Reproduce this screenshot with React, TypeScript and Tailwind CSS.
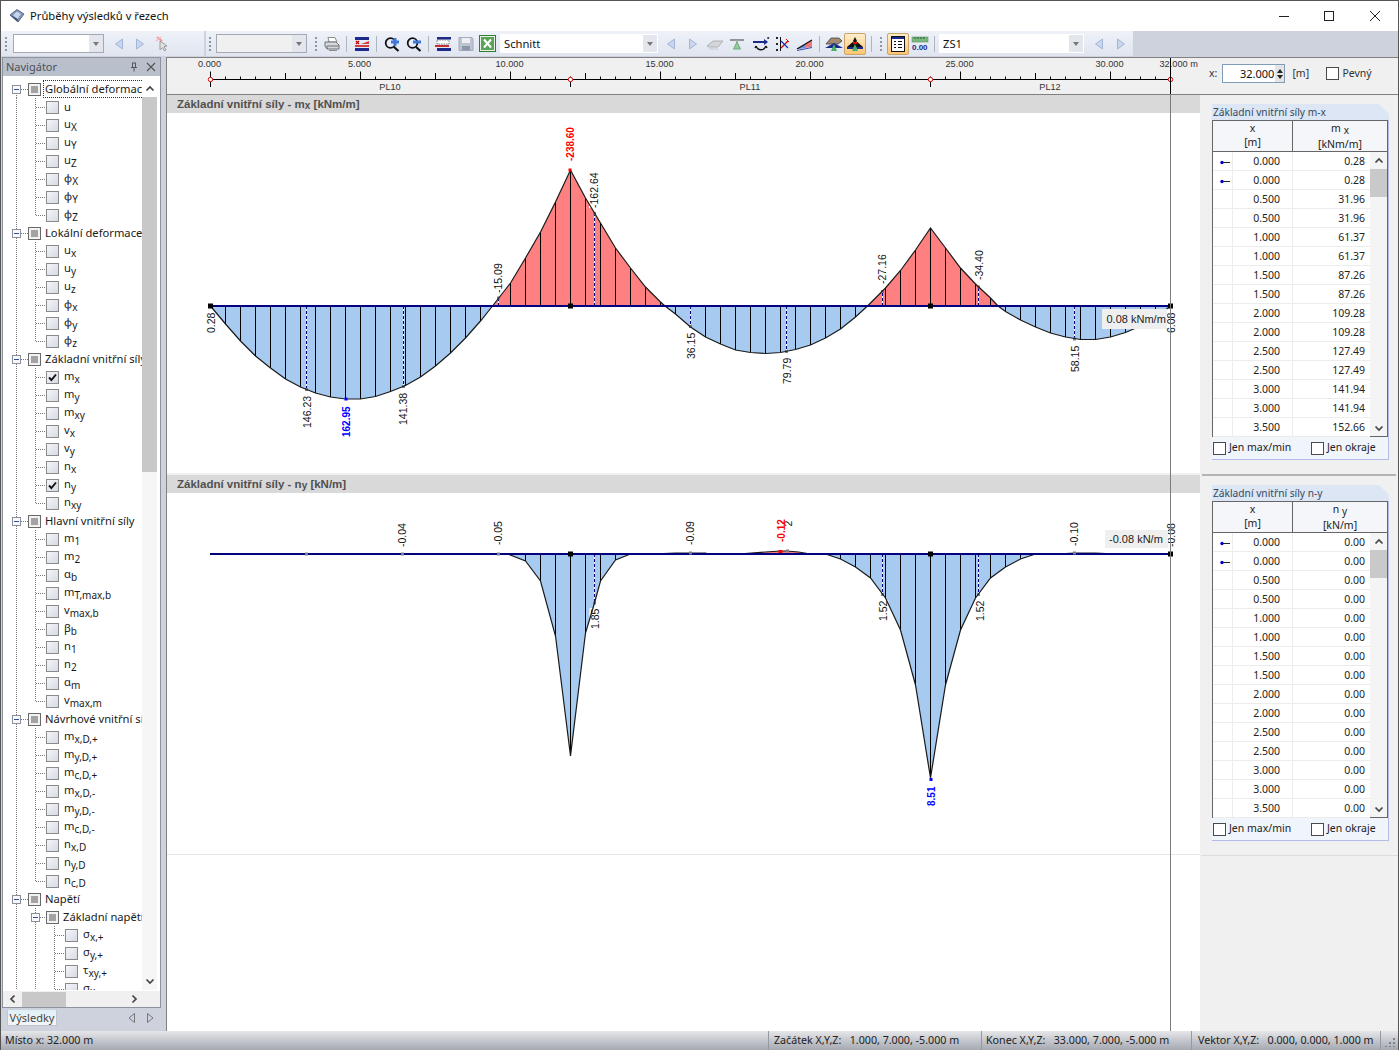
import type { ReactNode } from 'react'

type Pt = [number, number]

const sx = (m: number) => 210.5 + 30 * m

// moment curve pieces read off the plot, offset in px from the base line
const mxBlue: Pt[][] = [
  [[0, 0], [0.5, 18], [1, 35], [1.5, 50], [2, 62], [2.5, 73], [3, 81], [3.5, 87], [4, 91], [4.5, 93], [5, 93], [5.5, 90.5], [6, 85.5], [6.5, 79.5], [7, 71], [7.5, 60], [8, 47], [8.5, 32], [9, 15], [9.4, 0]],
  [[15.15, 0], [15.5, 8], [16, 21], [16.5, 31], [17, 38], [17.5, 44], [18, 46.5], [18.5, 47.5], [19, 46.5], [19.5, 43.5], [20, 39], [20.5, 32], [21, 23], [21.5, 11], [21.9, 0]],
  [[26.25, 0], [26.5, 5.5], [27, 14], [27.5, 21], [28, 27], [28.5, 31], [29, 33.5], [29.5, 33.5], [30, 31], [30.5, 26.5], [31, 20], [31.5, 11.5], [32, 0]],
]
const mxRed: Pt[][] = [
  [[9.4, 0], [10, -23], [10.5, -48], [11, -74], [11.5, -104], [12, -136], [12.5, -108], [13, -83], [13.5, -58], [14, -38], [14.5, -19], [15, -4], [15.15, 0]],
  [[21.9, 0], [22.5, -18], [23, -35.5], [23.5, -56], [24, -78], [24.5, -58], [25, -38], [25.5, -22], [26, -8], [26.25, 0]],
]
const nyBlue: Pt[][] = [
  [[9.9, 0], [10.5, 7], [11, 27], [11.5, 82], [12, 202], [12.5, 79], [12.8, 49], [13, 27], [13.5, 6], [14, 0]],
  [[20.5, 0], [21, 5], [21.5, 13], [22, 24], [22.5, 44], [23, 76], [23.5, 131], [24, 224], [24.5, 131], [25, 76], [25.5, 44], [26, 24], [26.5, 13], [27, 5], [27.5, 0]],
]
const nyRed: Pt[][] = [[[17.6, 0], [18.5, -2], [19, -3], [19.2, -3], [19.6, -2], [20, 0]]]
const nyThin: Pt[][] = [
  [[14.7, 0], [15.5, -1], [16, -1], [16.5, -1], [16.5, -1], [16.6, 0]],
  [[28.2, 0], [28.8, -1], [29.5, -1], [30.2, 0]],
]

interface ValueLabel {
  x: number
  y: number
  t: string
  c?: string
  b?: boolean
}

const mxLabels: ValueLabel[] = [
  { x: 211, y: 333, t: '0.28' },
  { x: 307, y: 428, t: '146.23' },
  { x: 346.5, y: 437, t: '162.95', c: '#0000ff', b: true },
  { x: 403.5, y: 425, t: '141.38' },
  { x: 498.5, y: 293, t: '-15.09' },
  { x: 570, y: 161, t: '-238.60', c: '#ff0000', b: true },
  { x: 594.5, y: 208, t: '-162.64' },
  { x: 691, y: 359, t: '36.15' },
  { x: 787, y: 384, t: '79.79' },
  { x: 882, y: 284, t: '-27.16' },
  { x: 979, y: 280, t: '-34.40' },
  { x: 1075, y: 372, t: '58.15' },
  { x: 1171.5, y: 333, t: '6.08' },
]
const nyLabels: ValueLabel[] = [
  { x: 402, y: 547, t: '-0.04' },
  { x: 498, y: 545, t: '-0.05' },
  { x: 595, y: 629, t: '1.85' },
  { x: 690, y: 545, t: '-0.09' },
  { x: 788, y: 541, t: '0.12' },
  { x: 781, y: 542, t: '-0.12', c: '#ff0000', b: true },
  { x: 883, y: 621, t: '1.52' },
  { x: 980, y: 621, t: '1.52' },
  { x: 931.5, y: 806, t: '8.51', c: '#0000ff', b: true },
  { x: 1074, y: 546, t: '-0.10' },
  { x: 1171.5, y: 547, t: '-0.08' },
]

function Curves({ parts, base, fill }: { parts: Pt[][]; base: number; fill: string }) {
  return (
    <>
      {parts.map((p, i) => (
        <polygon key={i} points={p.map(([m, d]) => `${sx(m)},${base + d}`).join(' ')} fill={fill} />
      ))}
    </>
  )
}

function Ticks({ parts, base }: { parts: Pt[][]; base: number }) {
  const out: ReactNode[] = []
  parts.forEach((p, i) => {
    p.forEach(([m, d], j) => {
      if (Math.abs(d) > 2 && (m * 2) % 1 === 0) {
        out.push(<line key={`${i}-${j}`} x1={sx(m)} x2={sx(m)} y1={base} y2={base + d} stroke="#000" strokeWidth={1} />)
      }
    })
  })
  return <>{out}</>
}

function Outline({ parts, base }: { parts: Pt[][]; base: number }) {
  return (
    <>
      {parts.map((p, i) => (
        <polyline key={i} points={p.map(([m, d]) => `${sx(m)},${base + d}`).join(' ')} fill="none" stroke="#1a1a1a" strokeWidth={1.2} />
      ))}
    </>
  )
}

function Dash({ x, y1, y2 }: { x: number; y1: number; y2: number }) {
  return (
    <>
      <line x1={x} x2={x} y1={y1} y2={y2} stroke="#fff" strokeWidth={1} />
      <line x1={x} x2={x} y1={y1} y2={y2} stroke="#000080" strokeWidth={1} strokeDasharray="3 2" />
      <rect x={x - 1.5} y={y2 - 1.5} width={3} height={3} fill="#808080" />
    </>
  )
}

function LabelBack({ l }: { l: ValueLabel }) {
  const len = l.t.length * 5.2
  return <rect x={l.x - 5.5} y={l.y - len} width={11} height={len} fill="#fff" />
}

function LabelText({ l }: { l: ValueLabel }) {
  return (
    <text
      transform={`rotate(-90 ${l.x} ${l.y})`}
      x={l.x}
      y={l.y + 3.8}
      fontSize={l.b ? 10 : 10.5}
      fontWeight={l.b ? 700 : 400}
      fill={l.c ?? '#111'}
    >
      {l.t}
    </text>
  )
}

function Support({ x, y }: { x: number; y: number }) {
  return <rect x={x - 2.5} y={y - 2.5} width={5} height={5} fill="#000" />
}

function MxChart() {
  const base = 306
  return (
    <svg width={1033} height={360} viewBox="167 113 1033 360" className="block font-['Liberation_Sans',sans-serif]">
      <Curves parts={mxBlue} base={base} fill="#a6caf0" />
      <Curves parts={mxRed} base={base} fill="#ff8080" />
      {mxLabels.map((l) => <LabelBack key={l.t} l={l} />)}
      <Ticks parts={mxBlue} base={base} />
      <Ticks parts={mxRed} base={base} />
      <Dash x={306.5} y1={base} y2={389.5} />
      <Dash x={403.5} y1={base} y2={386.5} />
      <Dash x={498.5} y1={base} y2={298} />
      <Dash x={594.5} y1={base} y2={213.5} />
      <Dash x={690.5} y1={base} y2={326.5} />
      <Dash x={786.5} y1={base} y2={351.5} />
      <Dash x={882.5} y1={base} y2={291.5} />
      <Dash x={978.5} y1={base} y2={287} />
      <Dash x={1074.5} y1={base} y2={339} />
      <Outline parts={mxBlue} base={base} />
      <Outline parts={mxRed} base={base} />
      <line x1={210} x2={1171} y1={base} y2={base} stroke="#000080" strokeWidth={2} />
      {mxLabels.map((l) => <LabelText key={l.t} l={l} />)}
      <rect x={344.5} y={397.5} width={3} height={3} fill="#0000ff" />
      <rect x={568.5} y={168.5} width={3} height={3} fill="#ff0000" />
      <Support x={210.5} y={base} />
      <Support x={570.5} y={base} />
      <Support x={930.5} y={base} />
      <Support x={1170.5} y={base} />
      <rect x={1102} y={309} width={65} height={20} fill="#efefef" />
      <text x={1106.5} y={323} fontSize={11} fill="#222">0.08 kNm/m</text>
    </svg>
  )
}

function NyChart() {
  const base = 554
  return (
    <svg width={1033} height={360} viewBox="167 494 1033 360" className="block font-['Liberation_Sans',sans-serif]">
      <Curves parts={nyBlue} base={base} fill="#a6caf0" />
      <Curves parts={nyRed} base={base} fill="#ff8080" />
      {nyLabels.filter((l) => l.t !== '0.12').map((l) => <LabelBack key={l.t + l.x} l={l} />)}
      <Ticks parts={nyBlue} base={base} />
      <Dash x={594.5} y1={base} y2={603} />
      <Dash x={882.5} y1={base} y2={594.5} />
      <Dash x={978.5} y1={base} y2={594.5} />
      <Outline parts={nyBlue} base={base} />
      <Outline parts={nyRed} base={base} />
      <Outline parts={nyThin} base={base} />
      <line x1={210} x2={1171} y1={base} y2={base} stroke="#000080" strokeWidth={2} />
      <rect x={305} y={552.5} width={3} height={3} fill="#808080" />
      <rect x={401} y={552.5} width={3} height={3} fill="#808080" />
      <rect x={497} y={552.5} width={3} height={3} fill="#808080" />
      <rect x={689} y={551.5} width={3} height={3} fill="#808080" />
      <rect x={786} y={549.5} width={3} height={3} fill="#808080" />
      <rect x={1073} y={551.5} width={3} height={3} fill="#808080" />
      {nyLabels.filter((l) => l.t === '0.12').map((l) => <LabelText key={l.t + l.x} l={l} />)}
      <rect x={782} y={527} width={11} height={20} fill="#fff" />
      {nyLabels.filter((l) => l.t !== '0.12').map((l) => <LabelText key={l.t + l.x} l={l} />)}
      <rect x={778.5} y={550} width={4} height={3} fill="#ff0000" />
      <rect x={929.5} y={778} width={3} height={3} fill="#0000ff" />
      <Support x={570.5} y={base} />
      <Support x={930.5} y={base} />
      <Support x={1170.5} y={base} />
      <rect x={1105} y={530} width={63} height={18} fill="#efefef" />
      <text x={1109} y={543} fontSize={11} fill="#222">-0.08 kN/m</text>
    </svg>
  )
}

function Ruler() {
  const ticks = Array.from({ length: 65 }, (_, i) => i)
  return (
    <svg width={1036} height={36} viewBox="167 58 1036 36" className="block shrink-0 font-['Liberation_Sans',sans-serif]">
      <line x1={210} x2={1171} y1={79.5} y2={79.5} stroke="#000" strokeWidth={1} />
      {ticks.map((i) => {
        const h = i % 10 === 0 ? 8 : i % 5 === 0 ? 6.5 : 3
        return <line key={i} x1={210.5 + 15 * i} x2={210.5 + 15 * i} y1={79.5 - h} y2={79.5} stroke="#000" strokeWidth={1} />
      })}
      {[0, 5, 10, 15, 20, 25, 30].map((m) => (
        <text key={m} x={sx(m) - 1} y={67} fontSize={9.2} textAnchor="middle" fill="#333">{m.toFixed(3)}</text>
      ))}
      <text x={1159.5} y={67} fontSize={9.2} fill="#333">32.000 m</text>
      {[0, 12, 24, 32].map((m) => (
        <g key={m}>
          <line x1={sx(m)} x2={sx(m)} y1={79.5} y2={87} stroke="#000" strokeWidth={1} />
          <circle cx={sx(m)} cy={79.5} r={2.2} fill="#fff" stroke="#e00000" strokeWidth={1} />
        </g>
      ))}
      <text x={390} y={90} fontSize={9.2} textAnchor="middle" fill="#333">PL10</text>
      <text x={750} y={90} fontSize={9.2} textAnchor="middle" fill="#333">PL11</text>
      <text x={1050} y={90} fontSize={9.2} textAnchor="middle" fill="#333">PL12</text>
      <line x1={1170.5} x2={1170.5} y1={58} y2={94} stroke="#000" strokeWidth={1} />
    </svg>
  )
}

/* ---------- navigator ---------- */

interface TreeRow {
  level: 0 | 1 | 2
  node?: boolean
  base: string
  sub?: string
  checked?: boolean
  last?: boolean
  first?: boolean
}

const leaves = (items: [string, string?, boolean?][]): TreeRow[] =>
  items.map(([base, sub, checked], i) => ({ level: 1, base, sub, checked, last: i === items.length - 1 }))

const treeRows: TreeRow[] = [
  { level: 0, node: true, base: 'Globální deformace', first: true },
  ...leaves([['u'], ['u', 'X'], ['u', 'Y'], ['u', 'Z'], ['φ', 'X'], ['φ', 'Y'], ['φ', 'Z']]),
  { level: 0, node: true, base: 'Lokální deformace' },
  ...leaves([['u', 'x'], ['u', 'y'], ['u', 'z'], ['φ', 'x'], ['φ', 'y'], ['φ', 'z']]),
  { level: 0, node: true, base: 'Základní vnitřní síly' },
  ...leaves([['m', 'x', true], ['m', 'y'], ['m', 'xy'], ['v', 'x'], ['v', 'y'], ['n', 'x'], ['n', 'y', true], ['n', 'xy']]),
  { level: 0, node: true, base: 'Hlavní vnitřní síly' },
  ...leaves([['m', '1'], ['m', '2'], ['α', 'b'], ['m', 'T,max,b'], ['v', 'max,b'], ['β', 'b'], ['n', '1'], ['n', '2'], ['α', 'm'], ['v', 'max,m']]),
  { level: 0, node: true, base: 'Návrhové vnitřní síly' },
  ...leaves([['m', 'x,D,+'], ['m', 'y,D,+'], ['m', 'c,D,+'], ['m', 'x,D,-'], ['m', 'y,D,-'], ['m', 'c,D,-'], ['n', 'x,D'], ['n', 'y,D'], ['n', 'c,D']]),
  { level: 0, node: true, base: 'Napětí' },
  { level: 1, node: true, base: 'Základní napětí' },
  { level: 2, base: 'σ', sub: 'x,+' },
  { level: 2, base: 'σ', sub: 'y,+' },
  { level: 2, base: 'τ', sub: 'xy,+' },
  { level: 2, base: 'σ', sub: 'x' },
]

function Connector({ row }: { row: TreeRow }) {
  const width = row.level === 0 ? 28 : row.level === 1 ? 46 : 65
  const line = { stroke: '#777', strokeWidth: 1, strokeDasharray: '1 1' }
  const boxX = row.level === 0 ? 12 : 31
  return (
    <svg width={width} height={18} className="shrink-0 block">
      <line x1={16.5} x2={16.5} y1={row.first ? 9 : 0} y2={18} {...line} />
      {row.level >= 1 && <line x1={35.5} x2={35.5} y1={0} y2={row.last ? 9 : 18} {...line} />}
      {row.level === 2 && <line x1={54.5} x2={54.5} y1={0} y2={18} {...line} />}
      {row.node ? (
        <>
          <line x1={boxX + 9} x2={width} y1={9.5} y2={9.5} {...line} />
          <rect x={boxX + 0.5} y={5.5} width={8} height={8} fill="#f7f9fc" stroke="#8a8f9a" />
          <line x1={boxX + 2} x2={boxX + 7} y1={9.5} y2={9.5} stroke="#2f4fa0" />
        </>
      ) : (
        <line x1={row.level === 1 ? 36 : 55} x2={width} y1={9.5} y2={9.5} {...line} />
      )}
    </svg>
  )
}

function Check({ row }: { row: TreeRow }) {
  if (row.node) {
    return (
      <span className="w-[13px] h-[13px] shrink-0 border border-[#6a6a6a] bg-[#f2f2f2] flex items-center justify-center">
        <span className="w-[7px] h-[7px] bg-[#a3a3a3]" />
      </span>
    )
  }
  return (
    <span className="w-[13px] h-[13px] shrink-0 border border-[#8a8a8a] bg-gradient-to-br from-[#f4f5f8] to-[#d6dbe4] flex items-center justify-center">
      {row.checked && (
        <svg width={9} height={9} viewBox="0 0 9 9">
          <path d="M1 4.5 L3.4 7 L8 1.5" fill="none" stroke="#111" strokeWidth={1.9} />
        </svg>
      )}
    </span>
  )
}

function Tree() {
  return (
    <div className="w-[142px] h-full overflow-hidden -ml-[3px] shrink-0">
      {treeRows.map((row, i) => (
        <div key={i} className="h-[18px] flex items-center w-[260px] text-[11.2px] text-[#1a1a1a]">
          <Connector row={row} />
          <Check row={row} />
          {row.node ? (
            <span className={`ml-[3px] px-[1px] leading-[16px] whitespace-nowrap ${row.first ? 'outline outline-1 outline-dotted outline-[#333]' : ''}`}>
              {row.base}
            </span>
          ) : (
            <span className="ml-[5px] leading-[16px] whitespace-nowrap">
              {row.base}
              {row.sub && <span className="text-[10px] align-[-3px]">{row.sub}</span>}
            </span>
          )}
        </div>
      ))}
    </div>
  )
}

function Chevron({ dir }: { dir: 'up' | 'down' | 'left' | 'right' }) {
  const d = {
    up: 'M1.5 6.5 L5 3 L8.5 6.5',
    down: 'M1.5 3.5 L5 7 L8.5 3.5',
    left: 'M6.5 1.5 L3 5 L6.5 8.5',
    right: 'M3.5 1.5 L7 5 L3.5 8.5',
  }[dir]
  return (
    <svg width={10} height={10} viewBox="0 0 10 10" className="block">
      <path d={d} fill="none" stroke="#444" strokeWidth={1.7} />
    </svg>
  )
}

function Navigator() {
  return (
    <aside className="w-[165px] shrink-0 flex flex-col pl-[1px]">
      <div className="w-[159px] h-[951px] flex flex-col border border-[#8d939e] bg-white">
        <div className="h-[18px] shrink-0 bg-[#b9c0cc] flex items-center pl-[3px] text-[11px] text-[#4b5058]">
          <span>Navigátor</span>
          <svg width={10} height={10} viewBox="0 0 10 10" className="ml-[72px]">
            <path d="M3 1 H7 M3.5 1 V5.5 M6.5 1 V5.5 M2 5.5 H8 M5 5.5 V9.5" fill="none" stroke="#555" />
          </svg>
          <svg width={10} height={10} viewBox="0 0 10 10" className="ml-[7px]">
            <path d="M1 1 L9 9 M9 1 L1 9" fill="none" stroke="#555" strokeWidth={1.2} />
          </svg>
        </div>
        <div className="h-[4px] shrink-0" />
        <div className="flex h-[910px] shrink-0">
          <Tree />
          <div className="w-[15px] shrink-0 flex flex-col bg-[#f6f6f6]">
            <div className="h-[17px] shrink-0 bg-white flex items-center justify-center"><Chevron dir="up" /></div>
            <div className="h-[375px] shrink-0 bg-[#c8c8c8]" />
            <div className="flex-1" />
            <div className="h-[17px] shrink-0 mb-[1px] flex items-center justify-center"><Chevron dir="down" /></div>
          </div>
        </div>
        <div className="flex-1 bg-[#f0f0f0] flex items-center pl-[5px] mt-[1px]">
          <Chevron dir="left" />
          <div className="w-[44px] h-[15px] ml-[4px] bg-[#c8c8c8]" />
          <div className="ml-[63px]"><Chevron dir="right" /></div>
        </div>
      </div>
      <div className="h-[22px] flex items-start pt-[2px] pl-[5px]">
        <div className="w-[50px] h-[16px] bg-gradient-to-b from-[#dff0f5] to-[#f4f6f8] border-b border-x border-[#c0c6d0] text-[11px] text-[#444] leading-[16px] text-center rounded-b-[2px]">
          Výsledky
        </div>
        <svg width={8} height={10} viewBox="0 0 8 10" className="ml-[71px] mt-[3px]"><path d="M6.5 0.5 V9.5 L1 5 Z" fill="none" stroke="#777" /></svg>
        <svg width={8} height={10} viewBox="0 0 8 10" className="ml-[10px] mt-[3px]"><path d="M1.5 0.5 V9.5 L7 5 Z" fill="none" stroke="#777" /></svg>
      </div>
    </aside>
  )
}

/* ---------- toolbar ---------- */

function Grip({ className }: { className: string }) {
  return (
    <span className={`w-[2px] h-[14px] shrink-0 flex flex-col justify-between ${className}`}>
      <span className="h-[2px] bg-[#8f96a3]" />
      <span className="h-[2px] bg-[#8f96a3]" />
      <span className="h-[2px] bg-[#8f96a3]" />
      <span className="h-[2px] bg-[#8f96a3]" />
    </span>
  )
}

function Sep({ className }: { className: string }) {
  return <span className={`w-px h-[16px] shrink-0 bg-[#aeb4c0] ${className}`} />
}

function Slot({ children, className = '', active = false }: { children: ReactNode; className?: string; active?: boolean }) {
  return (
    <span
      className={`w-[22px] h-[22px] shrink-0 flex items-center justify-center ${className} ${
        active ? 'border border-[#c9a56a] rounded-[2px] bg-gradient-to-b from-[#ffeecb] to-[#ffc56f]' : ''
      }`}
    >
      {children}
    </span>
  )
}

function Combo({ className, text, fill = 'bg-white', border = 'border-[#a4a9b4]' }: { className: string; text?: string; fill?: string; border?: string }) {
  return (
    <span className={`h-[19px] shrink-0 flex border ${border} ${fill} ${className}`}>
      <span className="flex-1 pl-[3px] text-[11.2px] leading-[17px] text-[#111]">{text}</span>
      <span className="w-[14px] bg-[#e3e6ec] flex items-center justify-center">
        <span className="w-0 h-0 border-x-[3.5px] border-x-transparent border-t-[4px] border-t-[#777]" />
      </span>
    </span>
  )
}

const Ico = ({ children, w = 18 }: { children: ReactNode; w?: number }) => (
  <svg width={w} height={16} viewBox={`0 0 ${w} 16`} className="block">{children}</svg>
)

const NavL = () => <Ico w={12}><path d="M9.5 3 V13 L2.5 8 Z" fill="#c9d6ee" stroke="#a3b6d8" /></Ico>
const NavR = () => <Ico w={12}><path d="M2.5 3 V13 L9.5 8 Z" fill="#c9d6ee" stroke="#a3b6d8" /></Ico>

const PinCursor = () => (
  <Ico w={16}>
    <path d="M3 1 L8 5" stroke="#ee9aa0" strokeWidth={2} />
    <path d="M2 5 L7 1" stroke="#f4b9bd" strokeWidth={1.5} />
    <path d="M6 5 V14 L8.5 11.5 L10.5 15 L12 14 L10 10.5 L13 10 Z" fill="#e4e4e4" stroke="#9a9a9a" />
  </Ico>
)

const Printer = () => (
  <Ico>
    <path d="M5 1.5 H12 L14 6 H6 Z" fill="#fff" stroke="#8b8b8b" />
    <path d="M2 6 H13 L16 9 V13 H4 L2 10 Z" fill="#d5d8de" stroke="#707070" />
    <path d="M4 13 V10 H16" fill="none" stroke="#707070" />
    <path d="M6 14.5 H14" stroke="#8b8b8b" />
  </Ico>
)

const Legend = () => (
  <Ico>
    <rect x={2} y={1} width={14} height={3} fill="#1c2a8c" />
    <path d="M3 5 L6 8 M6 5 L3 8" stroke="#c00000" strokeWidth={1.3} />
    <path d="M8 8 L16 5 V8 Z" fill="#d24040" />
    <rect x={2} y={9} width={14} height={2} fill="#d24040" />
    <rect x={2} y={12} width={14} height={3} fill="#1c2a8c" />
  </Ico>
)

const ZoomIco = ({ plus }: { plus?: boolean }) => (
  <Ico>
    <circle cx={7.5} cy={7} r={4.8} fill="#e8eefc" stroke="#111" strokeWidth={1.8} />
    <path d="M11 11 L15.5 15" stroke="#111" strokeWidth={2.2} />
    <path d="M8 6 H16" stroke="#3d78d8" strokeWidth={3} />
    {plus && <path d="M12 2 V10" stroke="#3d78d8" strokeWidth={3} />}
  </Ico>
)

const Flag = () => (
  <Ico>
    <rect x={3} y={1} width={14} height={2.5} fill="#1c2a8c" />
    <path d="M3 4 H15 V8 H3 Z" fill="#fff" stroke="#333" strokeWidth={0.6} strokeDasharray="1.5 1" />
    <path d="M1 9 H15 V11 H1 Z" fill="#c83030" />
    <rect x={3} y={12} width={14} height={3} fill="#1c2a8c" />
  </Ico>
)

const Save = () => (
  <Ico>
    <path d="M2 1.5 H15 L16 3 V14.5 H2 Z" fill="#bcc4d2" stroke="#a5acb9" />
    <rect x={5} y={2} width={8} height={5} fill="#eef0f4" />
    <rect x={5} y={10} width={8} height={4.5} fill="#8d97a8" />
  </Ico>
)

const Excel = () => (
  <svg width={17} height={17} viewBox="0 0 17 17" className="block">
    <rect x={0.5} y={0.5} width={16} height={16} fill="#e8f2e6" stroke="#2f7d32" />
    <rect x={2} y={2} width={13} height={13} fill="#5aa457" />
    <path d="M5 4.5 L12 12.5 M12 4.5 L5 12.5" stroke="#fff" strokeWidth={2} />
  </svg>
)

const Plate = () => (
  <Ico><path d="M1 10 L7 5 H17 L12 11 H3 Z" fill="#d3d5d8" stroke="#b0b2b6" /><path d="M3 13 H12" stroke="#c6c8cb" /></Ico>
)

const GreenBell = () => (
  <Ico>
    <path d="M2 4 H16" stroke="#8f9497" strokeWidth={2} />
    <path d="M7 4 L9 7 L11 4" fill="#a5a8aa" />
    <path d="M9 6 L5.5 13 H12.5 Z" fill="#8fcf9c" stroke="#6fa87b" />
  </Ico>
)

const FlipArrow = () => (
  <Ico>
    <path d="M1 6 H15" stroke="#1c2a8c" strokeWidth={2} />
    <path d="M12 3 L16 6 L12 9 Z" fill="#1c2a8c" />
    <path d="M15.5 1 L17 3 M17 1 L15.5 3" stroke="#333" />
    <path d="M4 10 C6 15 12 15 14 10 M4 10 L3 12 M14 10 L15 12" fill="none" stroke="#111" strokeWidth={1.4} />
  </Ico>
)

const Cross = () => (
  <Ico>
    <path d="M1 1 L3 3 M3 1 L1 3 M1 7 L3 9 M3 7 L1 9 M1 13 L3 15 M3 13 L1 15" stroke="#222" />
    <path d="M5.5 1 V15" stroke="#111" />
    <path d="M6 12 L13 5" stroke="#e00000" strokeWidth={1.2} />
    <path d="M6 5 L13 12" stroke="#1030d0" strokeWidth={1.2} />
    <path d="M11 3 L14 6" stroke="#e00000" />
  </Ico>
)

const Wedge = () => (
  <Ico>
    <path d="M1 13 L16 4 V11 Z" fill="#e77" />
    <path d="M1 13 L9 8.5 V12 Z" fill="#6b8fdc" />
    <path d="M1 13 L16 4" stroke="#111" strokeWidth={1.3} />
    <path d="M1 14.5 L16 11.5" stroke="#3050c0" />
  </Ico>
)

const LoadHand = () => (
  <Ico>
    <path d="M1 8 L6 2 H14 L17 5 L13 8 Z" fill="#a68a70" stroke="#444" strokeWidth={0.8} />
    <path d="M0 12 H18 L9 7 Z" fill="#1c2a8c" />
    <path d="M9 8 L6 15 H12 Z" fill="#49b36b" />
  </Ico>
)

const LoadStar = () => (
  <Ico>
    <path d="M9 1 L11 5 H7 Z" fill="#111" />
    <path d="M1 11 L9 4 L17 11 Z" fill="#111" />
    <path d="M7 6 H11 V8 H7 Z" fill="#d81010" />
    <path d="M1 12 H17" stroke="#1c2a8c" strokeWidth={2} />
    <path d="M9 8 L6 15 H12 Z" fill="#49b36b" />
  </Ico>
)

const ListIco = () => (
  <Ico>
    <rect x={2.5} y={0.5} width={13} height={15} fill="#fff" stroke="#111" />
    <rect x={3} y={1} width={12} height={2} fill="#1c2a8c" />
    <path d="M5 5.5 H7 M5 8.5 H7 M5 11.5 H7 M9 5.5 H13 M9 8.5 H13 M9 11.5 H13" stroke="#111" />
  </Ico>
)

const RulerIco = () => (
  <svg width={18} height={16} viewBox="0 0 18 16" className="block font-['Liberation_Sans',sans-serif]">
    <rect x={1} y={1} width={16} height={5} fill="#79b77e" stroke="#5c8e60" strokeWidth={0.6} />
    <path d="M4 1 V3 M7 1 V3 M10 1 V3 M13 1 V3" stroke="#2c5a30" />
    <text x={1} y={14} fontSize={8} fontWeight={700} fill="#1c2a8c">0.00</text>
  </svg>
)

function Toolbar() {
  return (
    <div className="h-[26px] shrink-0 bg-[#cdd2dc] flex">
      <div className="w-[1132px] h-[25px] bg-gradient-to-b from-[#eef1f8] to-[#e0e5ef] flex items-center">
        <Grip className="ml-[4px]" />
        <Combo className="ml-[6px] w-[91px]" />
        <Slot className="ml-[4px]"><NavL /></Slot>
        <Slot className="-ml-[1px]"><NavR /></Slot>
        <Slot><PinCursor /></Slot>
        <span className="w-[2px] h-[25px] ml-[31px] bg-[#cdd2dc]" />
        <Grip className="ml-[3px]" />
        <Combo className="ml-[5px] w-[91px]" fill="bg-[#f0f0f0]" />
        <Grip className="ml-[8px]" />
        <Slot className="ml-[4px]"><Printer /></Slot>
        <Sep className="ml-[3px]" />
        <Slot className="ml-[4px]"><Legend /></Slot>
        <Sep className="ml-[3px]" />
        <Slot className="ml-[4px]"><ZoomIco plus /></Slot>
        <Slot><ZoomIco /></Slot>
        <Sep className="ml-[3px]" />
        <Slot className="ml-[3px]"><Flag /></Slot>
        <Slot className="ml-[1px]"><Save /></Slot>
        <Slot className="-ml-[1px]"><Excel /></Slot>
        <Combo className="ml-[2px] w-[158px]" text="Schnitt" border="border-white" />
        <Slot className="ml-[2px]"><NavL /></Slot>
        <Slot><NavR /></Slot>
        <Slot><Plate /></Slot>
        <Slot><GreenBell /></Slot>
        <Slot className="ml-[2px]"><FlipArrow /></Slot>
        <Slot className="ml-[1px]"><Cross /></Slot>
        <Slot className="-ml-[1px]"><Wedge /></Slot>
        <Sep className="ml-[3px]" />
        <Slot className="ml-[3px]"><LoadHand /></Slot>
        <Slot className="-ml-[1px]" active><LoadStar /></Slot>
        <Sep className="ml-[5px]" />
        <Grip className="ml-[8px]" />
        <Slot className="ml-[5px]" active><ListIco /></Slot>
        <Slot><RulerIco /></Slot>
        <Sep className="ml-[3px]" />
        <Combo className="ml-[4px] w-[145px]" text="ZS1" border="border-white" />
        <Slot className="ml-[4px]"><NavL /></Slot>
        <Slot><NavR /></Slot>
      </div>
    </div>
  )
}

/* ---------- result tables ---------- */

const xCol = ['0.000', '0.000', '0.500', '0.500', '1.000', '1.000', '1.500', '1.500', '2.000', '2.000', '2.500', '2.500', '3.000', '3.000', '3.500']
const mxCol = ['0.28', '0.28', '31.96', '31.96', '61.37', '61.37', '87.26', '87.26', '109.28', '109.28', '127.49', '127.49', '141.94', '141.94', '152.66']
const nyCol = xCol.map(() => '0.00')

function SmallBox() {
  return <span className="block w-[13px] h-[13px] shrink-0 border border-[#4a4a4a] bg-white" />
}

function ResultTable({ title, base, sub, unit, values }: { title: string; base: string; sub: string; unit: string; values: string[] }) {
  return (
    <div className="w-[177px] text-[10.5px] text-[#222]">
      <div className="h-[16px] bg-[#dce6f5] pl-[1px] leading-[16px] text-[10.2px] text-[#34495e] [clip-path:polygon(0_0,calc(100%-10px)_0,100%_10px,100%_100%,0_100%)]">
        {title}
      </div>
      <div className="border-r border-b border-[#b3bbe6] bg-[#f0f4fb]">
        <div className="w-[176px] h-[317px] border border-[#666] bg-white flex flex-col">
          <div className="h-[31px] shrink-0 flex border-b border-[#666] bg-[#f4f6fa] leading-[14px] text-center">
            <div className="w-[80px] border-r border-[#666]">x<br />[m]</div>
            <div className="flex-1">
              {base} <span className="text-[10px] align-[-2px]">{sub}</span>
              <br />
              {unit}
            </div>
          </div>
          <div className="flex flex-1 min-h-0">
            <div className="w-[157px] shrink-0">
              {values.map((v, i) => (
                <div key={i} className="h-[19px] flex border-b border-[#ececec] leading-[18px]">
                  <div className="w-[20px] border-r border-[#ececec] flex items-center pl-[7px]">
                    {i < 2 && (
                      <svg width={10} height={5} viewBox="0 0 10 5" className="mt-[3px]">
                        <path d="M3 2.5 H10" stroke="#222" />
                        <circle cx={2} cy={2.5} r={1.7} fill="#0000d0" />
                      </svg>
                    )}
                  </div>
                  <div className="w-[60px] border-r border-[#ececec] text-right pr-[12px]">{xCol[i]}</div>
                  <div className="flex-1 text-right pr-[5px]">{v}</div>
                </div>
              ))}
            </div>
            <div className="flex-1 bg-[#f4f4f4] flex flex-col">
              <div className="h-[17px] flex items-center justify-center"><Chevron dir="up" /></div>
              <div className="h-[28px] bg-[#c9c9c9]" />
              <div className="flex-1" />
              <div className="h-[17px] flex items-center justify-center"><Chevron dir="down" /></div>
            </div>
          </div>
        </div>
        <div className="h-[22px] flex items-center pl-[1px]">
          <SmallBox />
          <span className="ml-[3px] w-[82px]">Jen max/min</span>
          <SmallBox />
          <span className="ml-[3px]">Jen okraje</span>
        </div>
      </div>
    </div>
  )
}

function ChartTitle({ base, sub, unit }: { base: string; sub: string; unit: string }) {
  return (
    <div className="h-[18px] shrink-0 bg-[#d9d9d9] pl-[10px] leading-[18px] font-['Liberation_Sans',sans-serif] font-bold text-[11.5px] text-[#505050]">
      Základní vnitřní síly - {base}
      <span className="text-[10px] align-[-1px]">{sub}</span> [{unit}]
    </div>
  )
}

function ResultView() {
  return (
    <main className="flex-1 min-w-0 relative flex flex-col border-l border-t border-[#808080] bg-[#f0f0f0]">
      <div className="h-[37px] shrink-0 flex items-start border-b border-[#808080] text-[10.5px] text-[#333]">
        <Ruler />
        <div className="h-[19px] mt-[6px] flex items-center">
          <span className="ml-[6px]">x:</span>
          <span className="ml-[5px] w-[63px] h-[19px] flex border border-[#7f9db9] bg-white">
            <span className="flex-1 text-right pr-[1px] leading-[17px] text-[11px] text-[#111]">32.000</span>
            <span className="w-[9px] flex flex-col items-center justify-center gap-[2px] bg-[#e4e4e4]">
              <span className="w-0 h-0 border-x-[3px] border-x-transparent border-b-[4px] border-b-[#222]" />
              <span className="w-0 h-0 border-x-[3px] border-x-transparent border-t-[4px] border-t-[#222]" />
            </span>
          </span>
          <span className="ml-[7px] w-[34px]">[m]</span>
          <SmallBox />
          <span className="ml-[3px]">Pevný</span>
        </div>
      </div>
      <div className="flex flex-1 min-h-0">
        <div className="w-[1033px] shrink-0 flex flex-col">
          <ChartTitle base="m" sub="x" unit="kNm/m" />
          <div className="h-[360px] shrink-0 bg-white"><MxChart /></div>
          <div className="h-[2px] shrink-0" />
          <ChartTitle base="n" sub="y" unit="kN/m" />
          <div className="h-[362px] shrink-0 bg-white pt-[1px] border-b border-[#e6e6e6]"><NyChart /></div>
          <div className="flex-1 bg-white" />
        </div>
        <div className="flex-1 flex flex-col pl-[12px] pt-[9px]">
          <ResultTable title="Základní vnitřní síly m-x" base="m" sub="x" unit="[kNm/m]" values={mxCol} />
          <div className="h-[2px] w-[194px] -ml-[10px] mt-[14px] mb-[9px] bg-[#b4b4b4]" />
          <ResultTable title="Základní vnitřní síly n-y" base="n" sub="y" unit="[kN/m]" values={nyCol} />
          <div className="h-px w-[197px] -ml-[11px] mt-[14px] bg-[#dcdcdc]" />
        </div>
      </div>
      {/* section line runs over both charts */}
      <div className="absolute left-[1003px] top-[37px] bottom-0 w-px bg-[#7c7c7c]" />
    </main>
  )
}

function StatusCell({ className, children }: { className: string; children: ReactNode }) {
  return <span className={`h-full border-l border-[#9398a2] whitespace-pre shrink-0 ${className}`}>{children}</span>
}

export default function App() {
  return (
    <div className="w-[1399px] h-[1050px] flex flex-col overflow-hidden bg-[#cdd2dc] border-t border-x border-[#555] font-['Noto_Sans',sans-serif]">
      <div className="h-[30px] shrink-0 bg-white flex items-center">
        <svg width={16} height={16} viewBox="0 0 16 16" className="ml-[8px] block">
          <path d="M1 7 L8 1.5 L15 6 L9 14 Z" fill="#7f93bd" stroke="#48566f" strokeWidth={0.8} />
          <path d="M4 7 L8 3.5 L12 6 L8.5 11 Z" fill="#c7d4ea" />
          <path d="M1 7 L9 14 L8.5 11 Z" fill="#3f4c68" />
        </svg>
        <span className="ml-[5px] text-[11.2px] text-[#111]">Průběhy výsledků v řezech</span>
        <svg width={110} height={14} viewBox="0 0 110 14" className="ml-auto mr-[9px] block">
          <path d="M0 7.5 H10" stroke="#222" />
          <rect x={45.5} y={2.5} width={9} height={9} fill="none" stroke="#222" />
          <path d="M91 2 L101 12 M101 2 L91 12" stroke="#222" />
        </svg>
      </div>
      <Toolbar />
      <div className="flex-1 min-h-0 flex">
        <Navigator />
        <ResultView />
      </div>
      <div className="h-[19px] shrink-0 bg-gradient-to-b from-[#e6e7ea] via-[#c4c7cd] to-[#a6a9b1] flex items-center text-[10.7px] leading-[19px] text-[#222]">
        <span className="w-[767px] pl-[4px] shrink-0">Místo x: 32.000 m</span>
        <StatusCell className="w-[213px] pl-[5px]">Začátek X,Y,Z:   1.000, 7.000, -5.000 m</StatusCell>
        <StatusCell className="w-[210px] pl-[4px]">Konec X,Y,Z:   33.000, 7.000, -5.000 m</StatusCell>
        <StatusCell className="w-[189px] pl-[6px]">Vektor X,Y,Z:   0.000, 0.000, 1.000 m</StatusCell>
        <span className="h-full border-l border-[#9398a2] flex-1 flex items-end justify-end pr-[3px] pb-[3px]">
          <svg width={10} height={10} viewBox="0 0 10 10" className="block">
            <path d="M8 1 H10 V3 H8 Z M4 5 H6 V7 H4 Z M8 5 H10 V7 H8 Z M0 9 H2 V11 H0 Z M4 9 H6 V11 H4 Z M8 9 H10 V11 H8 Z" fill="#7f838c" />
          </svg>
        </span>
      </div>
    </div>
  )
}
